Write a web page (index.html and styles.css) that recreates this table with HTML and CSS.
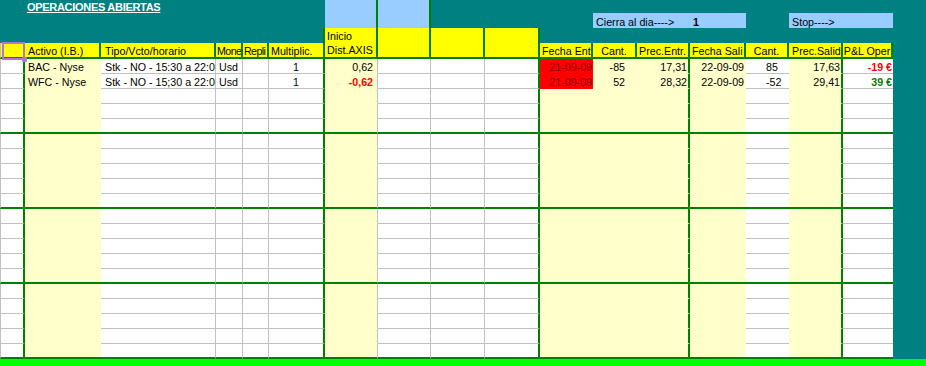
FILE: index.html
```html
<!DOCTYPE html>
<html lang="es">
<head>
<meta charset="utf-8">
<title>Operaciones abiertas</title>
<link rel="stylesheet" href="styles.css">
</head>
<body>
<div class="sheet">
  <table class="grid">
    <colgroup>
      <col class="w25"><col class="w76"><col class="w115"><col class="w27"><col class="w26"><col class="w56">
      <col class="w53"><col class="w53"><col class="w54"><col class="w55">
      <col class="w53"><col class="w44"><col class="w53">
      <col class="w56"><col class="w43"><col class="w54"><col class="w50">
    </colgroup>
    <thead>
      <tr class="r-title">
        <td></td>
        <td class="title" colspan="5"><span>OPERACIONES ABIERTAS</span></td>
        <td class="sky edge" rowspan="2"></td>
        <td class="sky edge" rowspan="2"></td>
        <td colspan="9"></td>
      </tr>
      <tr class="r-top">
        <td></td>
        <td colspan="5"></td>
        <td colspan="3"></td>
        <td class="sky pad" colspan="2">Cierra al dia----&gt;</td>
        <td class="sky pad strong">1</td>
        <td></td>
        <td class="sky pad" colspan="2">Stop----&gt;</td>
      </tr>
      <tr class="r-top">
        <td></td>
        <td colspan="4"></td>
        <td class="rule"></td>
        <td class="cap" rowspan="2">Inicio<br>Dist.AXIS</td>
        <td class="cap" rowspan="2"></td>
        <td class="cap" rowspan="2"></td>
        <td class="cap" rowspan="2"></td>
        <td colspan="7"></td>
      </tr>
      <tr class="r-head">
        <td class="corner"><span class="sel"></span></td>
        <td class="hd pl3">Activo (I.B.)</td>
        <td class="hd pl4">Tipo/Vcto/horario</td>
        <td class="hd tight">Mone</td>
        <td class="hd tight">Repli</td>
        <td class="hd">Multiplic.</td>
        <td class="hd">Fecha Entr</td>
        <td class="hd ctr">Cant.</td>
        <td class="hd ctr">Prec.Entr.</td>
        <td class="hd">Fecha Sali</td>
        <td class="hd ctr">Cant.</td>
        <td class="hd pl3">Prec.Salid</td>
        <td class="hd ctr">P&amp;L Oper</td>
      </tr>
    </thead>
    <tbody class="data">
      <tr><td></td><td>BAC - Nyse</td><td>Stk - NO - 15:30 a 22:0</td><td>Usd</td><td></td><td>1</td><td>0,62</td><td></td><td></td><td></td><td class="due">21-09-09</td><td>-85</td><td>17,31</td><td>22-09-09</td><td>85</td><td>17,63</td><td class="loss">-19 €</td></tr>
      <tr><td></td><td>WFC - Nyse</td><td>Stk - NO - 15;30 a 22:0</td><td>Usd</td><td></td><td>1</td><td class="loss">-0,62</td><td></td><td></td><td></td><td class="due">21-09-09</td><td>52</td><td>28,32</td><td>22-09-09</td><td>-52</td><td>29,41</td><td class="gain">39 €</td></tr>
      <tr><td></td><td></td><td></td><td></td><td></td><td></td><td></td><td></td><td></td><td></td><td></td><td></td><td></td><td></td><td></td><td></td><td></td></tr>
      <tr><td></td><td></td><td></td><td></td><td></td><td></td><td></td><td></td><td></td><td></td><td></td><td></td><td></td><td></td><td></td><td></td><td></td></tr>
      <tr class="end"><td></td><td></td><td></td><td></td><td></td><td></td><td></td><td></td><td></td><td></td><td></td><td></td><td></td><td></td><td></td><td></td><td></td></tr>
      <tr><td></td><td></td><td></td><td></td><td></td><td></td><td></td><td></td><td></td><td></td><td></td><td></td><td></td><td></td><td></td><td></td><td></td></tr>
      <tr><td></td><td></td><td></td><td></td><td></td><td></td><td></td><td></td><td></td><td></td><td></td><td></td><td></td><td></td><td></td><td></td><td></td></tr>
      <tr><td></td><td></td><td></td><td></td><td></td><td></td><td></td><td></td><td></td><td></td><td></td><td></td><td></td><td></td><td></td><td></td><td></td></tr>
      <tr><td></td><td></td><td></td><td></td><td></td><td></td><td></td><td></td><td></td><td></td><td></td><td></td><td></td><td></td><td></td><td></td><td></td></tr>
      <tr class="end"><td></td><td></td><td></td><td></td><td></td><td></td><td></td><td></td><td></td><td></td><td></td><td></td><td></td><td></td><td></td><td></td><td></td></tr>
      <tr><td></td><td></td><td></td><td></td><td></td><td></td><td></td><td></td><td></td><td></td><td></td><td></td><td></td><td></td><td></td><td></td><td></td></tr>
      <tr><td></td><td></td><td></td><td></td><td></td><td></td><td></td><td></td><td></td><td></td><td></td><td></td><td></td><td></td><td></td><td></td><td></td></tr>
      <tr><td></td><td></td><td></td><td></td><td></td><td></td><td></td><td></td><td></td><td></td><td></td><td></td><td></td><td></td><td></td><td></td><td></td></tr>
      <tr><td></td><td></td><td></td><td></td><td></td><td></td><td></td><td></td><td></td><td></td><td></td><td></td><td></td><td></td><td></td><td></td><td></td></tr>
      <tr class="end"><td></td><td></td><td></td><td></td><td></td><td></td><td></td><td></td><td></td><td></td><td></td><td></td><td></td><td></td><td></td><td></td><td></td></tr>
      <tr><td></td><td></td><td></td><td></td><td></td><td></td><td></td><td></td><td></td><td></td><td></td><td></td><td></td><td></td><td></td><td></td><td></td></tr>
      <tr><td></td><td></td><td></td><td></td><td></td><td></td><td></td><td></td><td></td><td></td><td></td><td></td><td></td><td></td><td></td><td></td><td></td></tr>
      <tr><td></td><td></td><td></td><td></td><td></td><td></td><td></td><td></td><td></td><td></td><td></td><td></td><td></td><td></td><td></td><td></td><td></td></tr>
      <tr><td></td><td></td><td></td><td></td><td></td><td></td><td></td><td></td><td></td><td></td><td></td><td></td><td></td><td></td><td></td><td></td><td></td></tr>
      <tr class="end"><td></td><td></td><td></td><td></td><td></td><td></td><td></td><td></td><td></td><td></td><td></td><td></td><td></td><td></td><td></td><td></td><td></td></tr>
    </tbody>
  </table>
  <div class="status"></div>
</div>
</body>
</html>
```

FILE: styles.css
```css
:root {
  --teal: #008080;
  --sky: #99ccff;
  --yel: #ffff00;
  --ly: #ffffcc;
  --green: #008000;
  --grid: #c0c0c0;
  --sel: #b072e0;
  --bright: #00ff00;
}

html, body {
  margin: 0;
  height: 100%;
  overflow: hidden;
}

body {
  background: var(--teal);
  font-family: "Liberation Sans", Arial, sans-serif;
  font-size: 10.7px;
  color: #000;
}

.sheet {
  display: flex;
  flex-direction: column;
  height: 366px;
}

.grid {
  table-layout: fixed;
  width: 893px;
  border-collapse: separate;
  border-spacing: 0;
  flex: none;
}

.grid td {
  padding: 0;
  line-height: 12px;
  vertical-align: bottom;
  white-space: nowrap;
  overflow: hidden;
}

/* column widths */
.w25 { width: 25px; }
.w76 { width: 76px; }
.w115 { width: 115px; }
.w27 { width: 27px; }
.w26 { width: 26px; }
.w56 { width: 56px; }
.w53 { width: 53px; }
.w54 { width: 54px; }
.w55 { width: 55px; }
.w44 { width: 44px; }
.w43 { width: 43px; }
.w50 { width: 50px; }

/* top rows */
.r-title { height: 13px; }
.r-top { height: 15px; }
.r-head { height: 16px; }

.grid .title {
  color: #fff;
  font-weight: bold;
  font-size: 11px;
  letter-spacing: -0.3px;
  padding-left: 2px;
  text-decoration: underline;
  overflow: visible;
}

.sky { background: var(--sky); }
.edge { border-right: 2px solid var(--green); }
.rule { border-right: 2px solid var(--green); }
.grid .pad { padding-left: 3px; }
.strong { font-weight: bold; }

.grid .cap {
  background: var(--yel);
  border-right: 2px solid var(--green);
  border-bottom: 2px solid var(--green);
  vertical-align: top;
  line-height: 14px;
  padding: 1px 0 0 2px;
}

/* header row */
.grid .hd {
  background: var(--yel);
  border-right: 2px solid var(--green);
  border-bottom: 2px solid var(--green);
  padding-left: 2px;
}
.grid .hd.pl3 { padding-left: 3px; }
.grid .hd.pl4 { padding-left: 4px; }
.grid .hd.ctr { padding-left: 0; text-align: center; }
.grid .hd.tight { padding-left: 1px; letter-spacing: -0.6px; }

.grid .corner {
  background: var(--yel);
  border-left: 1px solid var(--grid);
  border-right: 2px solid var(--green);
  border-bottom: 2px solid var(--green);
  position: relative;
  overflow: visible;
}

.sel {
  position: absolute;
  left: 1px;
  top: -1px;
  right: -2px;
  bottom: -3px;
  border: 2px solid var(--sel);
  z-index: 1;
}
.sel::after {
  content: "";
  position: absolute;
  right: -4px;
  bottom: -4px;
  width: 5px;
  height: 5px;
  border-radius: 1px;
  background: var(--sel);
}

/* data rows */
.data tr { height: 15px; }
.data td {
  background: #fff;
  border-bottom: 1px solid var(--grid);
}
.data td:nth-child(1) {
  border-left: 1px solid var(--grid);
  border-right: 2px solid var(--green);
}
.data td:nth-child(2),
.data td:nth-child(7),
.data td:nth-child(11),
.data td:nth-child(12),
.data td:nth-child(13),
.data td:nth-child(14),
.data td:nth-child(16) {
  background: var(--ly);
  border-bottom-color: transparent;
}
.data td:nth-child(3),
.data td:nth-child(4),
.data td:nth-child(5),
.data td:nth-child(7),
.data td:nth-child(8),
.data td:nth-child(9) {
  border-right: 1px solid var(--grid);
}
.data td:nth-child(6),
.data td:nth-child(10),
.data td:nth-child(13),
.data td:nth-child(16) {
  border-right: 2px solid var(--green);
}

.data td:nth-child(2) { padding-left: 3px; }
.data td:nth-child(3) { padding-left: 4px; }
.data td:nth-child(4) { padding-left: 3px; }
.data td:nth-child(6) { text-align: center; }
.data td:nth-child(7) { text-align: right; padding-right: 4px; }
.data td:nth-child(11) { text-align: right; padding-right: 1px; }
.data td:nth-child(12) { text-align: right; padding-right: 12px; }
.data td:nth-child(13) { text-align: right; padding-right: 1px; }
.data td:nth-child(14) { text-align: right; padding-right: 2px; }
.data td:nth-child(15) { padding-left: 20px; }
.data td:nth-child(16) { text-align: right; padding-right: 1px; }
.data td:nth-child(17) { text-align: right; padding-right: 1px; }

.data tr.end td { border-bottom: 2px solid var(--green); }

.data td.due {
  background: #ff0000;
  color: #8b0000;
}
.data td.loss { color: #ff0000; font-weight: bold; }
.data td.gain { color: #008000; font-weight: bold; }

.status {
  flex: 1;
  background: var(--bright);
}
```
